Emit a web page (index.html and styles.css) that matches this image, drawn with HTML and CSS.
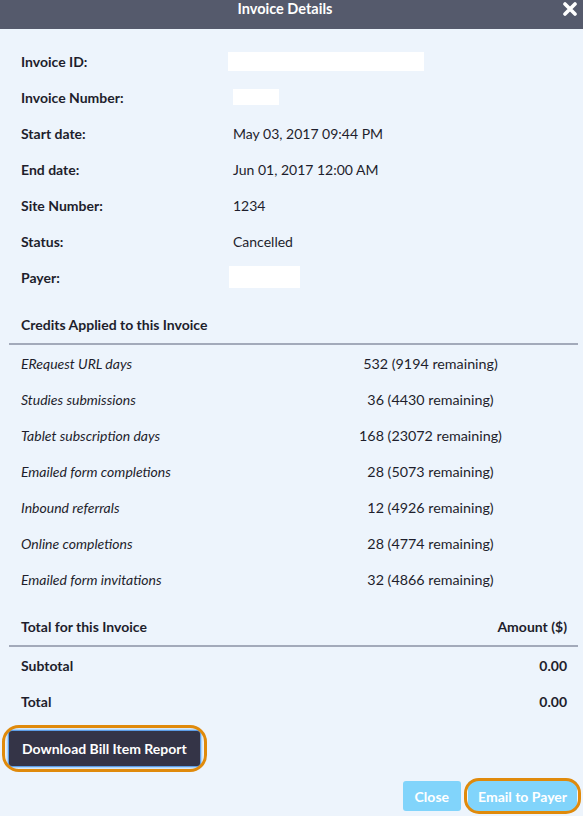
FILE: index.html
```html
<!DOCTYPE html>
<html>
<head>
<meta charset="utf-8">
<link rel="stylesheet" href="styles.css">
</head>
<body>
<div class="modal">
  <div class="modal-header">
    <span class="title">Invoice Details</span>
    <span class="close-x" aria-label="close">
      <svg width="14" height="14" viewBox="0 0 14 14"><path d="M2 2 L12 12 M12 2 L2 12" stroke="#fff" stroke-width="3.6" stroke-linecap="round"/></svg>
    </span>
  </div>
  <div class="modal-body">
    <div class="details">
      <div class="row"><span class="label">Invoice ID:</span><span class="value"><span class="redact r1"></span></span></div>
      <div class="row"><span class="label">Invoice Number:</span><span class="value"><span class="redact r2"></span></span></div>
      <div class="row"><span class="label">Start date:</span><span class="value">May 03, 2017 09:44 PM</span></div>
      <div class="row"><span class="label">End date:</span><span class="value">Jun 01, 2017 12:00 AM</span></div>
      <div class="row"><span class="label">Site Number:</span><span class="value">1234</span></div>
      <div class="row"><span class="label">Status:</span><span class="value">Cancelled</span></div>
      <div class="row"><span class="label">Payer:</span><span class="value"><span class="redact r3"></span></span></div>
    </div>

    <div class="table credits">
      <div class="thead"><span>Credits Applied to this Invoice</span></div>
      <div class="trow"><span class="ci">ERequest URL days</span><span class="cv">532 (9194 remaining)</span></div>
      <div class="trow"><span class="ci">Studies submissions</span><span class="cv">36 (4430 remaining)</span></div>
      <div class="trow"><span class="ci">Tablet subscription days</span><span class="cv">168 (23072 remaining)</span></div>
      <div class="trow"><span class="ci">Emailed form completions</span><span class="cv">28 (5073 remaining)</span></div>
      <div class="trow"><span class="ci">Inbound referrals</span><span class="cv">12 (4926 remaining)</span></div>
      <div class="trow"><span class="ci">Online completions</span><span class="cv">28 (4774 remaining)</span></div>
      <div class="trow"><span class="ci">Emailed form invitations</span><span class="cv">32 (4866 remaining)</span></div>
    </div>

    <div class="table totals">
      <div class="thead"><span>Total for this Invoice</span><span class="amt">Amount ($)</span></div>
      <div class="trow bold"><span>Subtotal</span><span class="amt">0.00</span></div>
      <div class="trow bold"><span>Total</span><span class="amt">0.00</span></div>
    </div>

    <div class="report">
      <button class="btn dark focus">Download Bill Item Report</button>
    </div>
  </div>
  <div class="modal-footer">
    <button class="btn light">Close</button>
    <button class="btn light focus">Email to Payer</button>
  </div>
</div>
</body>
</html>
```

FILE: styles.css
```css
* { box-sizing: border-box; }
html, body { margin: 0; padding: 0; }
body {
  font-family: Lato, "Open Sans", sans-serif;
  font-size: 14px;
  color: #1e1e2c;
  background: #edf4fc;
}
.modal {
  width: 583px;
  height: 816px;
  background: #edf4fc;
  display: flex;
  flex-direction: column;
}
.modal-header {
  height: 29px;
  background: #555a6c;
  color: #fff;
  display: flex;
  align-items: flex-start;
  justify-content: center;
  padding: 1px 13px 0 0;
  position: relative;
}
.title {
  font-weight: 700;
  font-size: 14.5px;
  line-height: 16px;
}
.close-x {
  position: absolute;
  right: 6px;
  top: 2px;
  width: 14px;
  height: 14px;
  display: flex;
}
.modal-body {
  padding: 14px 5px 0 9px;
}
.details .row {
  height: 36px;
  display: flex;
  align-items: center;
  padding-left: 12px;
}
.label {
  font-weight: 700;
  width: 212px;
}
.value {
  display: flex;
  align-items: center;
}
.redact { display: block; background: #fff; }
.r1 { width: 196px; height: 19px; margin-left: -5px; }
.r2 { width: 46px; height: 16px; }
.r3 { width: 71px; height: 22px; margin-left: -4px; }

.table { margin-top: 12px; }
.thead {
  height: 38px;
  display: flex;
  align-items: center;
  justify-content: space-between;
  padding: 0 11px 0 12px;
  font-weight: 700;
  border-bottom: 2px solid #a3aaba;
}
.thead span { margin-top: -2px; }
.trow {
  height: 36px;
  display: flex;
  align-items: center;
  justify-content: space-between;
  padding: 0 11px 0 12px;
}
.credits .ci {
  font-style: italic;
  font-size: 14px;
  width: 300px;
}
.credits .cv {
  width: 243px;
  text-align: center;
  padding-right: 24px;
  font-size: 14.3px;
}
.credits .trow { justify-content: flex-start; }
.trow.bold { font-weight: 700; }
.amt { text-align: right; }

.report {
  margin-top: 12px;
}
.btn {
  font-family: Lato, "Open Sans", sans-serif;
  font-weight: 700;
  font-size: 14px;
  color: #fff;
  border: none;
  border-radius: 3px;
  position: relative;
  cursor: pointer;
}
.btn.dark {
  background: #343447;
  height: 35px;
  padding: 0 13px;
  box-shadow: 0 0 0 1px #5d9ee8, 0 0 2px 2px #9ccaf5;
}
.btn.focus::after {
  content: "";
  position: absolute;
  inset: -6px -7px -6px -7px;
  border: 3px solid #e08a0b;
  border-radius: 17px;
}
.modal-footer {
  margin-top: auto;
  display: flex;
  justify-content: flex-end;
  gap: 7px;
  padding: 0 6px 5px 0;
}
.btn.light {
  background: #81d4fb;
  height: 30px;
  padding: 0 12px;
}
.modal-footer .btn.light.focus { padding: 0 10px; }
.modal-footer .btn.focus::after {
  inset: -3px -4px -3px -4px;
  border-radius: 15px;
}
```
